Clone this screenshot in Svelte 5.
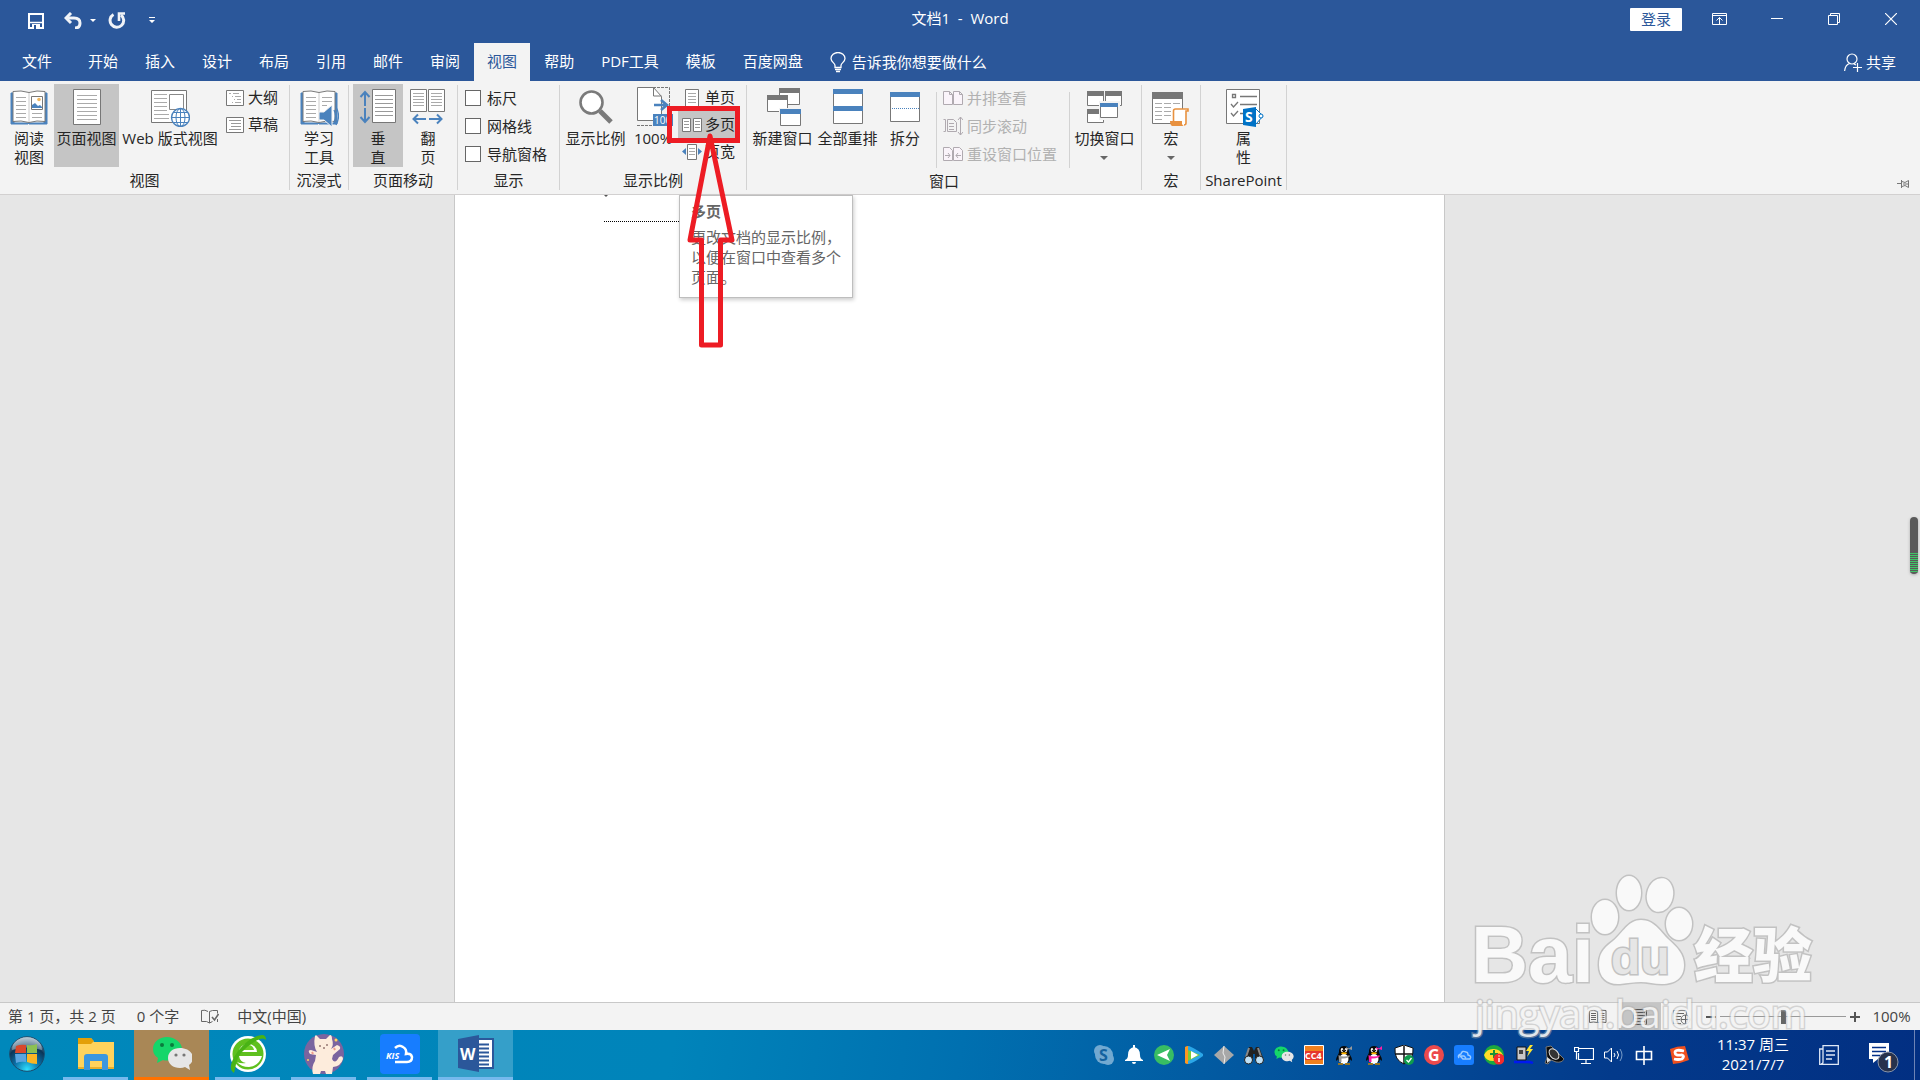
<script>
  const tabs = ['开始', '插入', '设计', '布局', '引用', '邮件', '审阅', '视图', '帮助', 'PDF工具', '模板', '百度网盘'];
  const checks = ['标尺', '网格线', '导航窗格'];
  const apps = ['explorer', 'wechat', 'browser', 'cat', 'kis', 'word'];
  const tray = ['skype', 'bell', 'plane', 'video', 'diamond', 'binoculars', 'wechat', 'cc', 'qq', 'qqpink', 'shield', 'g', 'cloud', 'plus', 'power', 'speaker', 'network', 'volume', 'zh'];
  let zoom = $state(50);
</script>

{#snippet book()}
  <path d="M2 6h3v30h15l-1 1H2zM35 6h3v31H20l-1-1h16z" fill="#4a82bd" stroke="#4a82bd" />
  <path d="M4 4.500q8-1.500 16 1 8-2.500 16-1v30q-8-1.500-16 1-8-2.500-16-1z" fill="#fff" stroke="#7a7a7a" />
  <path d="M20 6v29" stroke="#ccc" />
  <path d="M7 10.500h10M7 14.500h10M7 18.500h10M7 22.500h10M7 26.500h10M7 30.500h10" stroke="#aaa" />
{/snippet}

{#snippet wechat()}
  <path d="M15 3C7 3 1 8 1 15q0 6 5 9l-1 5 6-3q3 1 7 0c7-1 12-5 12-11S23 3 15 3z" fill="#15d66a" />
  <path d="M28 14c-7 0-12 4-12 10s5 10 12 10q3 0 5-1l5 3-1-5q4-3 4-7c0-6-6-10-13-10z" fill="#e6e6e6" />
  <g fill="#0a7b3d"><circle cx="10" cy="11" r="2" /><circle cx="20" cy="11" r="2" /></g>
  <g fill="#777"><circle cx="24" cy="21" r="1.600" /><circle cx="32" cy="21" r="1.600" /></g>
{/snippet}

{#snippet penguin(scarf, bow)}
  <path d="M10 1c-4 0-5 3-5 6 0 2-3 5-3 8 0 1 1 1 2-1l1 3h10l1-3c1 2 2 2 2 1 0-3-3-6-3-8 0-3-1-6-5-6z" fill="#080808" />
  <ellipse cx="10" cy="14" rx="4.500" ry="5" fill="#fff" />
  <ellipse cx="8" cy="5" rx="1.300" ry="2" fill="#fff" /><ellipse cx="12" cy="5" rx="1.300" ry="2" fill="#fff" />
  <circle cx="8.400" cy="5.400" r=".6" /><circle cx="11.600" cy="5.400" r=".6" />
  <ellipse cx="10" cy="8.300" rx="3" ry="1" fill="#ffb400" />
  <path d="M4.500 10q5.500 3 11 0v2q-5.500 2-8 1.500V17H5z" fill={scarf} />
  <path d="M12 2l3 1.500L18 1v4l-3-1-2 1z" fill={bow} />
  <path d="M4 19h5M11 19h5" stroke="#c08000" stroke-width="1.500" />
{/snippet}

<div class="window">
  <header>
    <div class="titlebar">
      <div class="quick">
        <button aria-label="保存"><svg width="16" height="16" viewBox="0 0 16 16" fill="none" stroke="#fff"><path d="M1 1h14v14H1z" stroke-width="2" /><path d="M1 9.500h14" stroke-width="1.500" /><path d="M4 11h8v4H4z" fill="#fff" stroke="none" /><path d="M6 12h2v4H6z" fill="#2b579a" stroke="none" /></svg></button>
        <button class="undo" aria-label="撤消"><svg width="18" height="17" viewBox="0 0 18 17" fill="none" stroke="#f0f3f8" stroke-width="3"><path d="M2 6h8q6 0 6 5t-5 5" /><path d="M7 1L2 6l5 5" /></svg></button>
        <button class="caret" aria-label="撤消列表"><svg width="6" height="3" viewBox="0 0 6 3"><path d="M0 0h6L3 3z" fill="#fff" /></svg></button>
        <button class="redo" aria-label="重复"><svg width="18" height="17" viewBox="0 0 18 17" fill="none" stroke="#f0f3f8" stroke-width="3"><path d="M5.500 2.500A6.800 6.800 0 1 0 13 3" /><path d="M11 9V1.500H17" stroke-width="2.600" /></svg></button>
        <button class="custom" aria-label="自定义快速访问工具栏"><svg width="6" height="7" viewBox="0 0 6 7"><path d="M0 0h6v1H0zM0 3h6L3 6z" fill="#fff" /></svg></button>
      </div>
      <h1>文档1&nbsp;&nbsp;-&nbsp;&nbsp;Word</h1>
      <div class="winctl">
        <button class="login">登录</button>
        <button class="ctl" aria-label="功能区显示选项"><svg width="15" height="12" viewBox="0 0 15 12" fill="none" stroke="#fff"><path d="M.5.5h14v11H.5zM.5 2.500h14M7.500 11V4.500M4.500 7.500l3-3 3 3" /></svg></button>
        <button class="ctl" aria-label="最小化"><svg width="12" height="12" viewBox="0 0 12 12"><path d="M0 5.500h12" stroke="#fff" /></svg></button>
        <button class="ctl" aria-label="向下还原"><svg width="12" height="12" viewBox="0 0 12 12" fill="none" stroke="#fff"><path d="M.5 2.500h9v9h-9zM2.500 2.500v-2h9v9h-2" /></svg></button>
        <button class="ctl" aria-label="关闭"><svg width="12" height="12" viewBox="0 0 12 12"><path d="M0 0l12 12M12 0L0 12" stroke="#fff" stroke-width="1.200" /></svg></button>
      </div>
    </div>
    <nav class="tabs">
      <button class="file">文件</button>
      {#each tabs as t}
        <button class="tab" class:active={t === '视图'}>{t}</button>
      {/each}
      <button class="tell"><svg width="16" height="21" viewBox="0 0 16 21" fill="none" stroke="#fff" stroke-width="1.300"><path d="M5 15.500v-2C5 11 1 10 1 6.500a7 6 0 0 1 14 0C15 10 11 11 11 13.500v2zM5 17.500h6M6 19.500h4" /></svg>告诉我你想要做什么</button>
      <button class="share"><svg width="18" height="19" viewBox="0 0 18 19" fill="none" stroke="#fff" stroke-width="1.200"><circle cx="8" cy="6" r="5" /><path d="M.6 18q.5-6 5-7.500M10 11l2 1M9 14.500h9M13.500 10v9" /></svg>共享</button>
    </nav>
  </header>

  <section class="ribbon">
    <div class="group g-view">
      <div class="items">
        <button class="big"><svg width="40" height="40" viewBox="0 0 40 40" fill="none">{@render book()}<path d="M22.500 9.500h11v13h-11z" fill="#fff" stroke="#777" /><circle cx="30" cy="12.500" r="1.800" fill="#f0b860" /><path d="M23 21v-3l3-2 3 3 2-1 2 2v1z" fill="#4a82bd" /><path d="M23 26.500h10M23 30.500h10" stroke="#aaa" /></svg><span>阅读<br />视图</span></button>
        <button class="big w65 on"><svg width="40" height="40" viewBox="0 0 40 40" fill="none"><path d="M6.500 2.500h27v35h-27z" fill="#fff" stroke="#777" /><path d="M10 8.500h20M10 12.500h20M10 16.500h20M10 20.500h20M10 24.500h20M10 28.500h20M10 32.500h20" stroke="#aaa" /></svg><span>页面视图</span></button>
        <button class="big web"><svg width="40" height="40" viewBox="0 0 40 40" fill="none"><path d="M1.500 3.500h35v32h-35z" fill="#fff" stroke="#777" /><path d="M4 7.500h13M4 11.500h13M4 15.500h13M4 19.500h13M4 23.500h13M4 27.500h15M4 31.500h15" stroke="#aaa" /><path d="M19.500 7.500h14v15h-14z" stroke="#888" fill="#fff" /><circle cx="30.500" cy="30.500" r="9" fill="#fff" stroke="#4a82bd" stroke-width="1.400" /><path d="M21.500 30.500h18M30.500 21.500v18M23 25.500h15M23 35.500h15" stroke="#4a82bd" /><ellipse cx="30.500" cy="30.500" rx="4.500" ry="9" stroke="#4a82bd" /></svg><span>Web 版式视图</span></button>
        <div class="small outline">
          <button><svg width="18" height="16" viewBox="0 0 18 16" fill="none"><path d="M.5.5h17v15H.5z" fill="#fff" stroke="#777" /><path d="M3 3.500h2m2 0h6M6 6.500h1m2 0h6M8 9.500h1m2 0h4M6 12.500h1m2 0h6" stroke="#aaa" /></svg>大纲</button>
          <button><svg width="18" height="16" viewBox="0 0 18 16" fill="none"><path d="M.5.5h17v15H.5z" fill="#fff" stroke="#777" /><path d="M3 3.500h12M5 6.500h10M5 9.500h10M3 12.500h12" stroke="#999" /></svg>草稿</button>
        </div>
      </div>
      <div class="label">视图</div>
    </div>
    <div class="sep"></div>
    <div class="group g-one">
      <div class="items"><button class="big fill"><svg width="40" height="40" viewBox="0 0 40 40" fill="none">{@render book()}<path d="M23 10.500h10M23 14.500h10M23 18.500h5" stroke="#aaa" /><path d="M20 25h5l8-7v22l-8-7h-5z" fill="#4a82bd" stroke="#f3f3f3" /><path d="M35 23q3 6 0 12M37 20q5 9 0 18" stroke="#4a82bd" stroke-width="1.300" /></svg><span>学习<br />工具</span></button></div>
      <div class="label">沉浸式</div>
    </div>
    <div class="sep"></div>
    <div class="group g-move">
      <div class="items">
        <button class="big on"><svg width="40" height="40" viewBox="0 0 40 40" fill="none"><path d="M14.500 2.500h23v33h-23z" fill="#fff" stroke="#777" /><path d="M17 8.500h18M17 12.500h18M17 16.500h18M17 20.500h18M17 24.500h18M17 28.500h18" stroke="#999" /><path d="M7 19V5M2.500 10L7 5l4.500 5M7 21v14M2.500 30L7 35l4.500-5" stroke="#4a82bd" stroke-width="2" /></svg><span>垂<br />直</span></button>
        <button class="big"><svg width="40" height="40" viewBox="0 0 40 40" fill="none"><path d="M2.500 2.500h16v22h-16zM20.500 2.500h16v22h-16z" fill="#fff" stroke="#777" /><path d="M5 6.500h11M5 9.500h11M5 12.500h11M5 15.500h11M5 18.500h11M23 6.500h11M23 9.500h11M23 12.500h11M23 15.500h11M23 18.500h11" stroke="#aaa" /><path d="M18 32H6M10 27.500L5.500 32l4.500 4.500M21 32h12M29 27.500l4.500 4.500-4.500 4.500" stroke="#4a82bd" stroke-width="2" /></svg><span>翻<br />页</span></button>
      </div>
      <div class="label">页面移动</div>
    </div>
    <div class="sep"></div>
    <div class="group g-show">
      <div class="items checks">
        {#each checks as c}<label><input type="checkbox" />{c}</label>{/each}
      </div>
      <div class="label">显示</div>
    </div>
    <div class="sep"></div>
    <div class="group g-zoom">
      <div class="items">
        <button class="big w65"><svg width="40" height="40" viewBox="0 0 40 40" fill="none" stroke="#7a7a7a"><circle cx="15.500" cy="15.500" r="11" fill="#fff" stroke-width="2.600" /><path d="M24 24l11 11" stroke-width="5" /></svg><span>显示比例</span></button>
        <button class="big"><svg width="40" height="40" viewBox="0 0 40 40" fill="none"><path d="M4 38.500h32.500V.5H20" stroke="#777" stroke-dasharray="3 1" /><path d="M4.500.5h16l8 9v24h-24z" fill="#fff" stroke="#777" /><path d="M20.500.5v8.500h8" stroke="#777" /><path d="M21 18h11M28 13l6 5-6 5" stroke="#4a82bd" stroke-width="2.600" /><path d="M20 27h20v12H20z" fill="#4a82bd" /><text x="21" y="37" fill="#fff" font-size="10">100</text></svg><span>100%</span></button>
        <div class="small pages">
          <button><svg width="20" height="18" viewBox="0 0 20 18" fill="none"><path d="M3.500.5h13v17h-13z" fill="#fff" stroke="#777" /><path d="M6 4.500h8M6 7.500h8M6 10.500h8M6 13.500h8" stroke="#aaa" /></svg>单页</button>
          <button class="on"><svg width="20" height="18" viewBox="0 0 20 18" fill="none"><path d="M.5 2.500h8v13h-8zM11.500 2.500h8v13h-8z" fill="#fff" stroke="#777" /><path d="M2 5.500h5M2 8.500h5M2 11.500h5M13 5.500h5M13 8.500h5M13 11.500h5" stroke="#999" /></svg>多页</button>
          <button><svg width="20" height="18" viewBox="0 0 20 18" fill="none"><path d="M5.500 1.500h9v15h-9z" fill="#fff" stroke="#777" /><path d="M7 5.500h6M7 8.500h6M7 11.500h6" stroke="#aaa" /><path d="M4 5v7L0 8.500zM16 5v7l4-3.500z" fill="#4a82bd" /></svg>页宽</button>
        </div>
      </div>
      <div class="label">显示比例</div>
    </div>
    <div class="sep"></div>
    <div class="group g-window">
      <div class="items">
        <button class="big w65"><svg width="40" height="40" viewBox="0 0 40 40" fill="#fff" stroke="#777"><path d="M16.500 2.500h20v15h-20z" /><path d="M16 1h21v5H16z" fill="#777" stroke="none" /><path d="M4.500 9.500h20v15h-20z" /><path d="M4 8h21v5H4z" fill="#777" stroke="none" /><path d="M16 21h23v18H16z" fill="#f3f3f3" stroke="none" /><path d="M17.500 23.500h20v15h-20z" /><path d="M17 22h21v5H17z" fill="#4a82bd" stroke="none" /></svg><span>新建窗口</span></button>
        <button class="big w65"><svg width="40" height="40" viewBox="0 0 40 40"><path d="M5.500 2.500h29v34h-29z" fill="#fff" stroke="#777" /><path d="M5 2h30v5H5zM5 19h30v5H5z" fill="#4a82bd" /></svg><span>全部重排</span></button>
        <button class="big"><svg width="40" height="40" viewBox="0 0 40 40"><path d="M5.500 5.500h29v29h-29z" fill="#fff" stroke="#777" /><path d="M5 5h30v5H5z" fill="#4a82bd" /><path d="M7 21.500h27" stroke="#4a82bd" stroke-dasharray="1 1" /></svg><span>拆分</span></button>
        <div class="sep inner"></div>
        <div class="small sync">
          <button disabled><svg width="20" height="16" viewBox="0 0 20 16" fill="#faf4fa" stroke="#b0aab0"><path d="M.5 1.500h6l3 3v10h-9zM10.500 1.500h6l3 3v10h-9zM6.500 1.500v3h3M16.500 1.500v3h3" /></svg>并排查看</button>
          <button disabled><svg width="20" height="20" viewBox="0 0 20 20" fill="none" stroke="#b0aab0"><path d="M.5 3.500h2v12h-2M4.500 3.500h6l3 3v9h-9zM6 7.500h5M6 10.500h5M6 13.500h5M17.500 1v18M15 4l2.500-3L20 4M15 16l2.500 3 2.500-3" /></svg>同步滚动</button>
          <button disabled><svg width="20" height="16" viewBox="0 0 20 16" fill="#faf4fa" stroke="#b0aab0"><path d="M.5 1.500h6l3 3v10h-9zM10.500 1.500h6l3 3v10h-9z" /><path d="M2 9.500h5M5 7l2 2.500L5 12M18 9.500h-5M15 7l-2 2.500 2 2.500" /></svg>重设窗口位置</button>
        </div>
        <div class="sep inner"></div>
        <button class="big w65"><svg width="40" height="40" viewBox="0 0 40 40" fill="#fff" stroke="#777"><path d="M2.500 4.500h16v14h-16zM20.500 4.500h16v14h-16zM2.500 22.500h16v13h-16z" /><path d="M2 4h17v5H2zM20 4h17v5H20zM2 22h17v5H2z" fill="#777" stroke="none" /><path d="M14 14h21v19H14z" fill="#f3f3f3" stroke="none" /><path d="M15.500 16.500h17v14h-17z" /><path d="M15 16h18v4H15z" fill="#4a82bd" stroke="none" /></svg><span>切换窗口<i></i></span></button>
      </div>
      <div class="label">窗口</div>
    </div>
    <div class="sep"></div>
    <div class="group g-one">
      <div class="items"><button class="big fill"><svg width="40" height="40" viewBox="0 0 40 40" fill="none"><path d="M1.500 5.500h30v31h-30z" fill="#fff" stroke="#777" /><path d="M1 5h31v7H1z" fill="#777" /><path d="M4 16.500h7m2 0h7m2 0h7M4 20.500h7m2 0h7M4 24.500h7m2 0h7M4 28.500h7m2 0h7M4 32.500h7" stroke="#aaa" /><path d="M23 36V22h14q-2 1-2 3v14H23z" fill="#fff" /><path d="M22.500 34V24q0-2 2-2H37v2h-2v12q0 2-2 2" stroke="#e8913f" stroke-width="1.600" /><path d="M19 34h12v3q1 2 2 2H21q-2-1-2-5z" fill="#e8913f" /></svg><span>宏<i></i></span></button></div>
      <div class="label">宏</div>
    </div>
    <div class="sep"></div>
    <div class="group g-sp">
      <div class="items"><button class="big fill"><svg width="40" height="40" viewBox="0 0 40 40" fill="none"><path d="M2.500 2.500h33v34h-33z" fill="#fff" stroke="#777" /><path d="M8.500 7.500h3v3h-3zM16 9.500h17M16 17.500h17M7 17l2.500 3 4.500-5M7 26l2.500 3 4.500-5M16 26.500h3" stroke="#777" stroke-width="1.300" /><path d="M32 22l7 7-7 8-4-4v-8z" fill="#fff" stroke="#0072c6" /><circle cx="37" cy="29" r="2" fill="#fff" stroke="#0072c6" /><path d="M19 22l13-2v20l-13-2z" fill="#0072c6" /><text x="21" y="35" fill="#fff" font-size="14" font-weight="700">S</text></svg><span>属<br />性</span></button></div>
      <div class="label">SharePoint</div>
    </div>
    <div class="sep"></div>
    <button class="pin" aria-label="固定功能区"><svg width="12" height="8" viewBox="0 0 12 8" fill="none" stroke="#777"><path d="M0 3.500h4M4.500 0v8M5 1.500l3 1 3.500-2v7l-3.500-2-3 1M6 4h5" /></svg></button>
  </section>

  <main>
    <article><div class="mark"></div><div class="rule"></div></article>
    <div class="gauge"><div></div></div>
  </main>

  <footer class="status">
    <span>第 1 页，共 2 页</span>
    <span class="words">0 个字</span>
    <svg width="18" height="15" viewBox="0 0 18 15" fill="none" stroke="#666"><path d="M8.500 2.500V14M7 2.500Q4 .5.500 1.500v11h5l3 1.500 3-1.500M8.500 2.500l3-1h5v3M16.500 13v-3" /><path d="M11 8l2.500 3 4-6" stroke-width="1.600" /></svg>
    <span class="lang">中文(中国)</span>
    <div class="right">
      <button aria-label="阅读视图"><svg width="18" height="15" viewBox="0 0 18 15" fill="none" stroke="#666"><path d="M.5 1.500q4-1 8 1 4-2 8.500-1v12q-4.500-1-8.500 0-4-1-8 0zM8.500 2v12M2 4.500h5M2 6.500h5M2 8.500h5M2 10.500h5M10.500 4.500h5M10.500 6.500h5M10.500 8.500h5M10.500 10.500h5" /></svg></button>
      <button class="on" aria-label="页面视图"><svg width="14" height="16" viewBox="0 0 14 16" fill="none" stroke="#555"><path d="M.5.500h13v15H.500zM2 3.500h10M2 6.500h10M2 9.500h10M2 12.500h10" /></svg></button>
      <button aria-label="Web 版式视图"><svg width="18" height="16" viewBox="0 0 18 16" fill="none" stroke="#666"><path d="M8 14.500H.5V1.500h13V6M2 4.500h9M2 7.500h6M2 10.500h5" /><circle cx="12.500" cy="10.500" r="4.500" /><path d="M8 10.500h9M12.500 6v9" /></svg></button>
      <button class="step" aria-label="缩小"><svg width="10" height="10" viewBox="0 0 10 10"><path d="M0 5h10" stroke="#555" stroke-width="2" /></svg></button>
      <input type="range" aria-label="显示比例" bind:value={zoom} />
      <button class="step" aria-label="放大"><svg width="10" height="10" viewBox="0 0 10 10"><path d="M0 5h10M5 0v10" stroke="#555" stroke-width="2" /></svg></button>
      <span class="pct">100%</span>
    </div>
  </footer>

  <footer class="taskbar">
    <button class="start" aria-label="开始菜单"><svg width="36" height="36" viewBox="0 0 36 36"><defs><radialGradient id="orb" cx=".5" cy=".95" r=".95"><stop offset="0" stop-color="#2fe0ff" /><stop offset=".4" stop-color="#0a6ea6" /><stop offset=".7" stop-color="#0b3557" /><stop offset="1" stop-color="#9fb9c9" /></radialGradient></defs><circle cx="18" cy="18" r="17.300" fill="url(#orb)" stroke="#1b4a6b" /><path d="M3 14a15 13 0 0 1 30 0q-15-5-30 0z" fill="#fff" opacity=".35" /><path d="M7 10q5-2 10-1v8H6z" fill="#d9482b" /><path d="M18 9q5 1 10-1v9H18z" fill="#8cc152" /><path d="M6 18h11v8q-5-1-10 1z" fill="#5aa5e0" /><path d="M18 18h10v10q-5 0-10-2z" fill="#fbb524" /></svg></button>
    {#each apps as a}
      <button class="app {a}" aria-label={a}>
        <svg width="40" height="40" viewBox="0 0 40 40">
          {#if a === 'explorer'}
            <path d="M2 4h13l3 4h20v27H2z" fill="#ffd35c" /><path d="M2 4h13l3 3-3 3H2z" fill="#e3a008" /><path d="M2 33h36v2H2z" fill="#e8b02e" /><path d="M8 36V23q0-3 3-3h18q3 0 3 3v13h-6v-9H14v9z" fill="#3b97e0" />
          {:else if a === 'wechat'}
            {@render wechat()}
          {:else if a === 'browser'}
            <circle cx="20" cy="20" r="18" fill="#fff" /><circle cx="20" cy="20" r="15.500" fill="#5fc01f" /><path d="M11 18a9 8 0 0 1 18 0zM11 22h23q-3 10-13 11-8 0-12-5 4 2 9 1-6-1-7-7z" fill="#fff" /><path d="M14 16q1-5 6-5t6 5z" fill="#6ccc25" /><path d="M6 39Q-2 34 10 17 22 2 34 1q4 0 4 5Q35 2 26 8 10 18 8 30q-1 6-2 9z" fill="#49b315" />
          {:else if a === 'cat'}
            <circle cx="20" cy="20" r="20" fill="#7a649f" /><path d="M11 2q1-2 3 1l2 2h6l4-4q2 0 2 4 2 6-1 10l6-4q4 1 3 4l-7 6-1 4q3 6 7-2 4-2 4 2-2 7-10 8l-1 7h-6l-1-3h-4l-1 3H9q-2-7 2-13l1-6-6-1q-3-4 1-4l6 2q-4-6-2-16z" fill="#fdecdc" /><path d="M15 12h2m5-1h2m-5 3h2" stroke="#643f3f" /><circle cx="32" cy="6" r="1.500" fill="#ffd460" /><circle cx="4" cy="26" r="1" fill="#ffd460" /><path d="M8 18l1 2M30 14l1 2" stroke="#ef9a8c" stroke-width="2" />
          {:else if a === 'kis'}
            <rect width="40" height="40" rx="4" fill="#177dff" /><text x="6" y="25" font-size="9" font-style="italic" font-weight="700" fill="#fff">KIS</text><path d="M15 14q4-4 8-1 4 2 3 7 5-1 6 3 0 5-5 5H15" fill="none" stroke="#fff" stroke-width="2.500" />
          {:else}
            <path d="M21 5h16v29H21z" fill="#fff" stroke="#2b579a" stroke-width="2" /><path d="M22 10.500h11M22 14.500h11M22 18.500h11M22 22.500h11M22 26.500h11M22 30.500h11" stroke="#2b579a" stroke-width="2" /><path d="M2 5l21-4v37L2 34z" fill="#2b579a" /><text x="4" y="26" font-size="16" font-weight="700" fill="#fff">W</text>
          {/if}
        </svg>
      </button>
    {/each}
    <div class="tray">
      {#each tray as t}
        <button aria-label={t}>
          <svg width="20" height="20" viewBox="0 0 20 20">
            {#if t === 'skype'}
              <rect width="12" height="12" rx="6" fill="#72a9d1" /><rect x="8" y="8" width="12" height="12" rx="6" fill="#72a9d1" /><circle cx="10" cy="10" r="9" fill="#72a9d1" /><text x="5" y="16" font-size="16" font-weight="700" fill="#15629f">S</text>
            {:else if t === 'bell'}
              <path d="M10 2q6 1 6 8 0 4 3 5v1H1v-1q3-1 3-5 0-7 6-8zM8 17h4q0 2-2 2t-2-2z" fill="#fff" /><path d="M10 0v3" stroke="#fff" stroke-width="2" />
            {:else if t === 'plane'}
              <circle cx="10" cy="10" r="10" fill="#38bd63" /><path d="M3 10l13-6-3 6 3 6z" fill="#fff" />
            {:else if t === 'video'}
              <path d="M1 2q3-2 5 0v16q-3 2-5 0z" fill="#ff9720" /><path d="M4 1q3 0 15 8v2Q8 19 4 19z" fill="#2ba7e8" /><path d="M4 5l12 5-12 6z" fill="#7dcc35" /><path d="M7 6l7 4-7 4z" fill="#fff" />
            {:else if t === 'diamond'}
              <path d="M10 1l10 9-10 9-10-9z" fill="#a8a8a8" /><path d="M10 1L9 8l2 4-1 7" fill="none" stroke="#eee" />
            {:else if t === 'binoculars'}
              <path d="M5 2h3l2 4 2-4h3l5 13H11V9H9v6H0z" fill="#222" /><path d="M5 3L2 12M14 3l3 9" stroke="#888" stroke-width="2" /><circle cx="4.500" cy="15" r="4" fill="#bfe1f7" stroke="#222" /><circle cx="15.500" cy="15" r="4" fill="#bfe1f7" stroke="#222" />
            {:else if t === 'wechat'}
              <g transform="scale(.48)">{@render wechat()}</g>
            {:else if t === 'cc'}
              <rect width="20" height="20" rx="1" fill="#fff" /><rect x="1" y="1" width="18" height="18" fill="#f0801e" /><rect x="1" y="6" width="18" height="9" fill="#e5352c" /><text x="1" y="14" font-size="9" font-weight="700" fill="#fff">CC4</text>
            {:else if t === 'qq'}
              {@render penguin('#999', '#999')}
            {:else if t === 'qqpink'}
              {@render penguin('#ff1ea5', '#ff1ea5')}
            {:else if t === 'shield'}
              <path d="M10 0l9 3q1 12-9 16Q0 15 1 3z" fill="#fff" stroke="#111" /><path d="M10 1v18M1 9h18" stroke="#111" stroke-width="1.500" /><circle cx="15" cy="15" r="5" fill="#0e9d4c" /><path d="M12.500 15l2 2 3-4" fill="none" stroke="#fff" stroke-width="1.300" />
            {:else if t === 'g'}
              <circle cx="10" cy="10" r="10" fill="#ec4a4c" /><text x="4" y="16" font-size="16" font-weight="700" fill="#fff">G</text>
            {:else if t === 'cloud'}
              <rect width="20" height="20" rx="3" fill="#177dff" /><path d="M5 13q-2-3 2-4 1-4 5-2 2 0 2 3 4 1 2 4H9l-3-3h4l2 2" fill="none" stroke="#9ccbff" stroke-width="1.400" />
            {:else if t === 'plus'}
              <circle cx="10" cy="10" r="10" fill="#1ca83f" /><path d="M0 10a10 10 0 0 1 10-6q6 0 9 6-4 6-10 6-7 0-9-6z" fill="#ffdc28" /><path d="M10 5v8M6 9h8" stroke="#159439" stroke-width="2" /><circle cx="15" cy="14" r="5.500" fill="#f52c2c" /><path d="M15 13v4M15 10.500v1" stroke="#fff" stroke-width="1.400" />
            {:else if t === 'power'}
              <path d="M3 2h9v13H3z" fill="#c8c8c8" stroke="#111" /><path d="M5 5h4v4H5z" fill="#444" /><path d="M16 0l-4 6h3l-2 6 6-8h-3l3-4z" fill="#ffe52e" /><path d="M0 17h13q4 0 6 1" stroke="#0018f0" stroke-width="2.500" fill="none" />
            {:else if t === 'speaker'}
              <path d="M2 2l5-1 13 13q-2 4-8 3l-5-2-3 4-3-1 2-5z" fill="#0b0b0b" stroke="#777" /><ellipse cx="10" cy="9" rx="4" ry="6" transform="rotate(-40 10 9)" fill="#333" stroke="#ddd" /><path d="M3 12l4 3-4 3z" fill="#ddd" />
            {:else if t === 'network'}
              <path d="M5 3.500h14.500v11H4.500V8M12 14.500v4M7 18.500h10M.5 2.500h4v4h-4zM2.500 6.500v8" fill="none" stroke="#fff" stroke-width="1.200" />
            {:else if t === 'volume'}
              <path d="M.5 7h3l4-4v14l-4-4h-3z" fill="none" stroke="#fff" /><path d="M10 8q2 2 0 4M13 6q3 4 0 8" fill="none" stroke="#fff" /><path d="M16 4q4 6 0 12" fill="none" stroke="#789cc8" />
            {:else}
              <path d="M2.500 6.500h15v8h-15zM10 1v19" fill="none" stroke="#fff" stroke-width="1.600" />
            {/if}
          </svg>
        </button>
      {/each}
      <button class="sogou" aria-label="输入法"><svg width="20" height="20" viewBox="0 0 20 20"><path d="M1 4q7-3 15-3l4 14q-7 3-16 4z" fill="#f0501e" /><path d="M15 6Q6 4 6 7.500t7 2.500q3 1 0 4-4 1-8 0" fill="none" stroke="#fff" stroke-width="2.800" /></svg></button>
      <button class="clock">11:37 周三<br />2021/7/7</button>
      <button class="note" aria-label="便笺"><svg width="20" height="20" viewBox="0 0 20 20" fill="none" stroke="#dfe8f6" stroke-width="1.300"><path d="M4 .7h15.300v18.600H.7V4H4zM4 4v13q0 2-2 2M7 6h9M7 10h9M7 14h6" /></svg></button>
      <button class="notify" aria-label="通知"><svg width="32" height="32" viewBox="0 0 32 32"><path d="M1 2h20v16H10l-5 4v-4H1z" fill="#fff" /><path d="M4 6.500h14M4 10.500h14M4 14.500h9" stroke="#032f87" stroke-width="1.300" /><circle cx="20" cy="21" r="10" fill="#27324c" stroke="#8b95a8" /><text x="16" y="27" font-size="16" font-weight="700" fill="#fff">1</text></svg></button>
      <div class="peek"></div>
    </div>
  </footer>

  <div class="tooltip" role="tooltip"><strong>多页</strong><p>更改文档的显示比例，以便在窗口中查看多个页面。</p></div>

  <svg class="callout" width="74" height="244" viewBox="0 0 74 244" fill="none" stroke="#ed1c24" stroke-width="5"><path d="M2.500 2.500h68v32h-68z" /><path d="M43 30l22 104H53.500v105H34.500V134H23z" stroke-linejoin="round" /></svg>

  <svg class="watermark" width="350" height="170" viewBox="0 0 350 170" stroke="#c2c2c2" stroke-width="3" fill="#f9f9f9" paint-order="stroke">
    <text class="bai" x="1" y="110">Bai</text>
    <ellipse cx="135" cy="45" rx="13" ry="17" /><ellipse cx="159" cy="21" rx="12" ry="17" /><ellipse cx="190" cy="23" rx="13" ry="17" transform="rotate(12 190 23)" /><ellipse cx="209" cy="52" rx="13" ry="16" />
    <path d="M171 48C158 48 153 61 143 69 132 77 129 83 129 93c0 13 9 20 21 19 8-1 14-2 21-2s13 2 21 2c13 0 22-6 22-19 0-11-7-18-16-26-8-8-14-19-27-19z" />
    <text class="du" x="141" y="102">du</text>
    <text class="exp" x="224" y="105">经验</text>
    <text class="url" x="5" y="156">jingyan.baidu.com</text>
  </svg>
</div>

<style>
  :global(body) { margin: 0; }
  .window { position: relative; height: 100vh; display: flex; flex-direction: column; overflow: hidden; font: 15px/19px "Open Sans", "Noto Sans CJK SC", sans-serif; color: #262626; }
  button { font: inherit; color: inherit; background: none; border: 0; padding: 0; margin: 0; display: flex; align-items: center; justify-content: center; white-space: nowrap; }
  svg { display: block; flex: none; }
  header { background: #2b579a; color: #fff; flex: none; }
  .titlebar { height: 43px; display: grid; grid-template-columns: 1fr auto 1fr; align-items: start; }
  h1 { font: inherit; margin: 9px 0 0; }
  .quick { display: flex; align-items: center; padding: 12px 0 0 28px; height: 17px; }
  .undo { margin-left: 20px; }
  .caret { margin-left: 8px; }
  .redo { margin-left: 12px; }
  .custom { margin-left: 23px; }
  .winctl { display: flex; justify-content: flex-end; }
  .login { width: 52px; height: 23px; margin: 8px 9px 0 0; background: #fff; color: #2b579a; border-radius: 1px; }
  .ctl { width: 57px; height: 38px; }
  .winctl { padding-right: 1px; }
  .tabs { display: flex; height: 38px; gap: 1px; }
  .file { width: 74px; padding-bottom: 2px; }
  .tab { padding: 0 13px 2px; }
  .active { background: #f3f3f3; color: #2b579a; }
  .tell { gap: 6px; margin-left: 13px; }
  .share { gap: 4px; margin-left: auto; padding-right: 24px; }
  .ribbon { flex: none; height: 114px; padding-top: 3px; box-sizing: border-box; background: #f3f3f3; border-bottom: 1px solid #d2d0d0; display: flex; }
  .sep { width: 1px; background: #d2d2d2; margin: 1px 0 4px; flex: none; }
  .inner { margin: 8px 2px 0 6px; height: 76px; }
  .group { display: flex; flex-direction: column; flex: none; }
  .g-view { width: 289px; }
  .g-one { width: 58px; }
  .g-move { width: 108px; }
  .g-show { width: 101px; }
  .g-zoom { width: 186px; }
  .g-window { width: 394px; }
  .g-sp { width: 85px; }
  .items { display: flex; height: 85px; }
  .g-view .items, .g-move .items { padding-left: 4px; }
  .g-zoom .items, .g-window .items { padding-left: 3px; }
  .label { text-align: center; line-height: 27px; white-space: nowrap; }
  .big { flex-direction: column; justify-content: flex-start; width: 50px; padding-top: 3px; gap: 2px; flex: none; }
  .w65 { width: 65px; }
  .web { width: 102px; }
  .fill { width: 100%; }
  .on { background: #c5c5c5; }
  .big i { display: block; width: 0; margin: 8px auto 0; border: 4px solid transparent; border-top-color: #666; border-bottom: 0; }
  .small { display: flex; flex-direction: column; }
  .small button { height: 27px; justify-content: flex-start; gap: 4px; }
  .outline { padding-left: 5px; }
  .pages { width: 62px; }
  .pages button { padding-left: 4px; gap: 3px; }
  .sync { padding: 0 2px 0 4px; width: 118px; }
  .sync button { height: 28px; color: #b1b1b1; }
  .checks { flex-direction: column; gap: 12px; padding: 6px 0 0 7px; height: 79px; }
  .checks label { display: flex; align-items: center; gap: 6px; height: 16px; }
  input[type='checkbox'] { appearance: none; box-sizing: border-box; width: 16px; height: 16px; margin: 0; border: 1px solid #666; background: #fff; }
  .pin { margin: auto 11px 6px auto; }
  main { flex: 1; min-height: 0; background: #e6e6e6; display: flex; justify-content: center; padding-right: 22px; position: relative; }
  article { flex: 0 1 991px; box-sizing: border-box; background: #fff; border: solid #c8c8c8; border-width: 0 1px; padding-left: 149px; }
  .mark { width: 0; border: 2px solid transparent; border-top-color: #555; }
  .rule { width: 75px; margin-top: 22px; border-top: 1px dotted #000; }
  .gauge { position: absolute; right: 2px; top: 322px; width: 8px; height: 57px; border-radius: 4px; background: #5a5a5a; overflow: hidden; box-shadow: 0 1px 3px #aaa; }
  .gauge div { margin-top: 36px; height: 20px; background: repeating-linear-gradient(#3fc566 0 1px, #5a5a5a 1px 2px); }
  .status { flex: none; height: 27px; border-top: 1px solid #c8c8c8; background: #f3f3f3; display: flex; align-items: center; padding-left: 8px; color: #444; }
  .words { margin: 0 22px 0 21px; }
  .lang { margin-left: 18px; }
  .right { margin-left: auto; display: flex; align-items: center; height: 100%; }
  .right button { width: 42px; height: 100%; }
  .right .step { width: 16px; }
  input[type='range'] { appearance: none; width: 126px; height: 14px; margin: 0 1px; background: linear-gradient(#999, #999) center / 100% 1px no-repeat; }
  input[type='range']::-webkit-slider-thumb { appearance: none; width: 5px; height: 14px; background: #666; }
  .pct { width: 57px; text-align: center; }
  .taskbar { flex: none; height: 50px; display: flex; gap: 1px; background: linear-gradient(100deg, #0088bb 0%, #0084ba 35%, #0070b0 50%, #034f9a 70%, #033a8b 84%, #022f82 100%); color: #fff; }
  .start { width: 54px; padding-bottom: 2px; margin-right: 3px; }
  .app { width: 75px; padding-bottom: 2px; background: linear-gradient(#76b9ed, #76b9ed) center bottom / 65px 3px no-repeat; }
  .wechat { background: linear-gradient(#ff7200, #ff7200) bottom / 100% 3px no-repeat #a98756; }
  .word { background: linear-gradient(#76b9ed, #76b9ed) bottom / 100% 3px no-repeat #359fc9; }
  .tray { margin-left: auto; display: flex; }
  .tray button { width: 30px; }
  .tray .sogou { width: 40px; }
  .tray .clock { width: 100px; margin-left: 4px; padding-bottom: 2px; line-height: 20px; }
  .tray .note { width: 52px; }
  .tray .notify { width: 50px; padding: 4px 0 0 8px; box-sizing: border-box; margin-right: 9px; }
  .peek { width: 5px; border-left: 1px solid #6d83b5; }
  .tooltip { position: absolute; left: 679px; top: 195px; width: 174px; height: 103px; box-sizing: border-box; padding: 5px 10px 0 11px; background: #fff; border: 1px solid #bebebe; box-shadow: 1px 2px 4px #0003; color: #666; line-height: 20px; }
  .tooltip p { margin: 6px 0 0; width: 152px; }
  .callout { position: absolute; left: 667px; top: 106px; }
  .watermark { position: absolute; right: 100px; bottom: 38px; pointer-events: none; }
  .bai { font: 700 79px "Liberation Sans", sans-serif; }
  .du { font: 700 48px "Liberation Sans", sans-serif; fill: #e6e6e6; }
  .exp { font: 900 59px "Noto Sans CJK SC", sans-serif; }
  .url { font: 39px "Open Sans", sans-serif; fill: #fafafad9; stroke: #b0b0b077; }
</style>
